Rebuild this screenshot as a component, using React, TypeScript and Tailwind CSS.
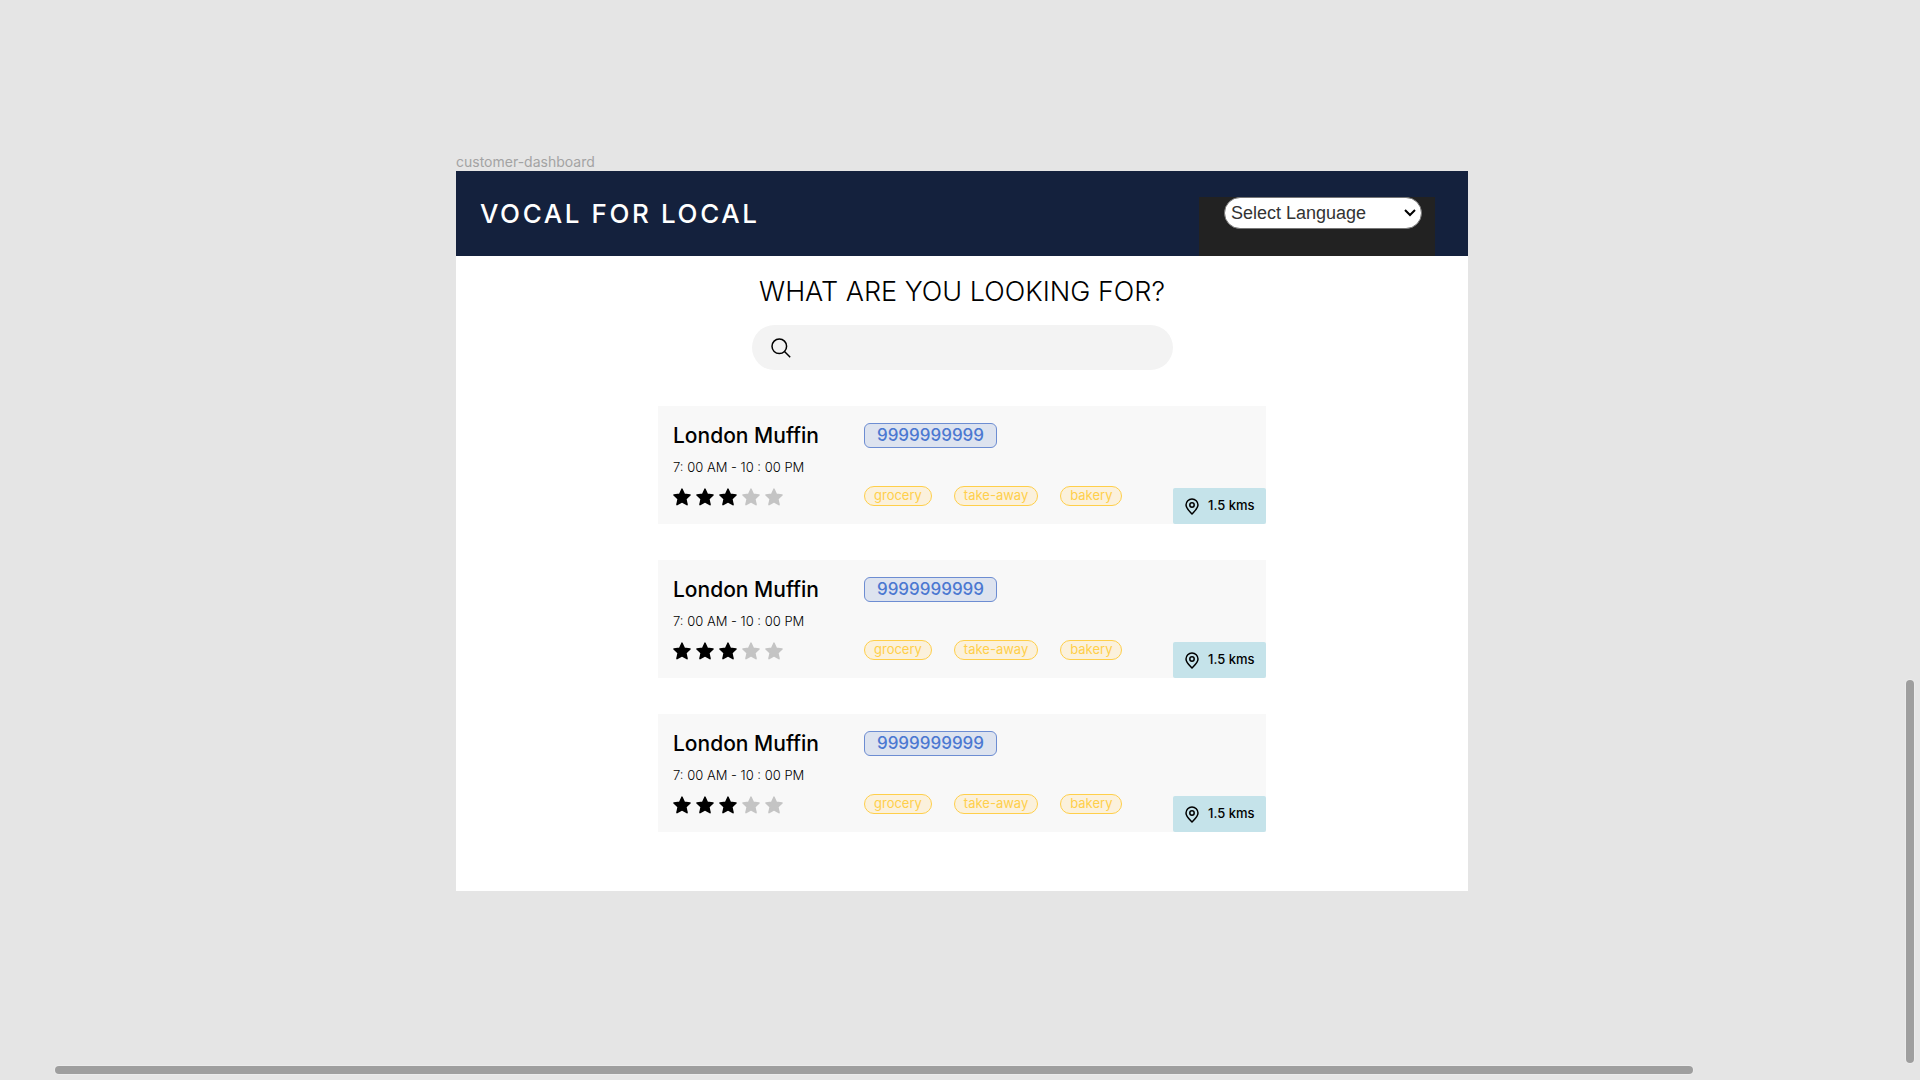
type Shop = {
  id: number;
  name: string;
  hours: string;
  phone: string;
  rating: number;
  tags: string[];
  distance: string;
};

const shops: Shop[] = [1, 2, 3].map((id) => ({
  id,
  name: 'London Muffin',
  hours: '7: 00 AM - 10 : 00 PM',
  phone: '9999999999',
  rating: 3,
  tags: ['grocery', 'take-away', 'bakery'],
  distance: '1.5 kms',
}));

function Star({ filled }: { filled: boolean }) {
  return (
    <svg viewBox="0 0 18 18" className={filled ? 'size-[18px] text-black' : 'size-[18px] text-[#c4c4c4]'} aria-hidden="true">
      <path
        d="M9 1.2 L11.3 6.4 L17 7 L12.8 10.9 L14 16.6 L9 13.8 L4 16.6 L5.2 10.9 L1 7 L6.7 6.4 Z"
        fill="currentColor"
        stroke="currentColor"
        strokeWidth="1.6"
        strokeLinejoin="round"
      />
    </svg>
  );
}

function Rating({ value }: { value: number }) {
  return (
    <div className="flex gap-[5px]" role="img" aria-label={`${value} out of 5 stars`}>
      {[1, 2, 3, 4, 5].map((n) => (
        <Star key={n} filled={n <= value} />
      ))}
    </div>
  );
}

function PinIcon() {
  return (
    <svg viewBox="0 0 14 17" className="h-[17px] w-[14px]" fill="none" stroke="black" strokeWidth="1.5" strokeLinejoin="round" aria-hidden="true">
      <path d="M7 16 C4.8 13.6 1 10.4 1 6.9 A6 6 0 0 1 13 6.9 C13 10.4 9.2 13.6 7 16 Z" />
      <circle cx="7" cy="7" r="2.2" />
    </svg>
  );
}

function ShopCard({ shop }: { shop: Shop }) {
  return (
    <li className="flex bg-[#f8f8f8]">
      <div className="w-[206px] shrink-0 pt-4 pb-[18px] pl-[15px]">
        <h2 className="text-[21px] leading-7 font-medium">{shop.name}</h2>
        <p className="mt-[7px] mb-[11px] text-[13px] leading-5 font-light">{shop.hours}</p>
        <Rating value={shop.rating} />
      </div>
      <div className="flex flex-1 flex-col items-start justify-between pt-[17px] pb-[18px]">
        <a
          href={`tel:${shop.phone}`}
          className="flex h-[25px] w-[133px] items-center justify-center rounded-md border border-[#6d8dd2] bg-[#dde3ef] text-[17px] font-medium text-[#4b78d1]"
        >
          {shop.phone}
        </a>
        <ul className="flex gap-[22px]">
          {shop.tags.map((tag) => (
            <li
              key={tag}
              className="flex h-5 items-center rounded-full border border-[#ffcf4a] bg-[#fbf1dc] px-[9px] pb-0.5 text-[13px] leading-4 text-[#ffcf4a]"
            >
              {tag}
            </li>
          ))}
        </ul>
      </div>
      <div className="flex h-9 w-[93px] items-center gap-[9px] self-end rounded-xs bg-[#c5e3ea] pl-3 text-[13px] font-medium">
        <PinIcon />
        {shop.distance}
      </div>
    </li>
  );
}

export default function App() {
  return (
    <div className="relative min-h-screen bg-[#e5e5e5] pt-[152px] pl-1 font-[Inter,sans-serif] text-black">
      <main className="mx-auto w-full max-w-[1012px]">
        <p className="text-[14px] leading-[19px] text-[#a3a3a3]">customer-dashboard</p>
        <div className="bg-white pb-[59px]">
          <header className="flex h-[85px] items-center justify-between bg-[#14213d] pr-[33px] pl-6">
            <p className="text-[26px] font-medium tracking-widest text-white">VOCAL FOR LOCAL</p>
            <div className="flex w-[236px] items-start justify-end self-end bg-[#222222] pr-[13px] pb-[27px]">
              <div className="relative w-[198px]">
                <select
                  aria-label="Select Language"
                  className="h-8 w-full appearance-none rounded-full border border-[#767676] bg-white pl-1.5 font-['Liberation_Sans',sans-serif] text-[18px] text-[#333333]"
                >
                  <option>Select Language</option>
                </select>
                <svg viewBox="0 0 12 8" className="pointer-events-none absolute top-3 right-1.5 h-2 w-3" fill="none" stroke="black" strokeWidth="2" aria-hidden="true">
                  <path d="M1 1 L6 6 L11 1" />
                </svg>
              </div>
            </div>
          </header>
          <h1 className="pt-[18px] text-center text-[27px] leading-9 font-light">WHAT ARE YOU LOOKING FOR?</h1>
          <label className="mx-auto mt-[15px] flex h-[45px] w-full max-w-[421px] items-center gap-3 rounded-full bg-[#f3f3f3] px-[19px]">
            <svg viewBox="0 0 20 20" className="size-5 shrink-0" fill="none" stroke="black" strokeWidth="1.5" aria-hidden="true">
              <circle cx="8.3" cy="8.3" r="7.3" />
              <path d="M13.5 13.5 L19.2 19.2" />
            </svg>
            <input type="search" aria-label="Search shops" className="min-w-0 flex-1 bg-transparent outline-none" />
          </label>
          <ul className="mx-auto mt-9 flex max-w-[608px] flex-col gap-9">
            {shops.map((shop) => (
              <ShopCard key={shop.id} shop={shop} />
            ))}
          </ul>
        </div>
      </main>
      <div className="absolute top-[680px] right-[6px] bottom-[17px] w-2 rounded-full bg-[#9e9e9e] ring-1 ring-[#ebebeb]" />
      <div className="absolute right-[227px] bottom-[6px] left-[55px] h-2 rounded-full bg-[#9e9e9e] ring-1 ring-[#ebebeb]" />
    </div>
  );
}
